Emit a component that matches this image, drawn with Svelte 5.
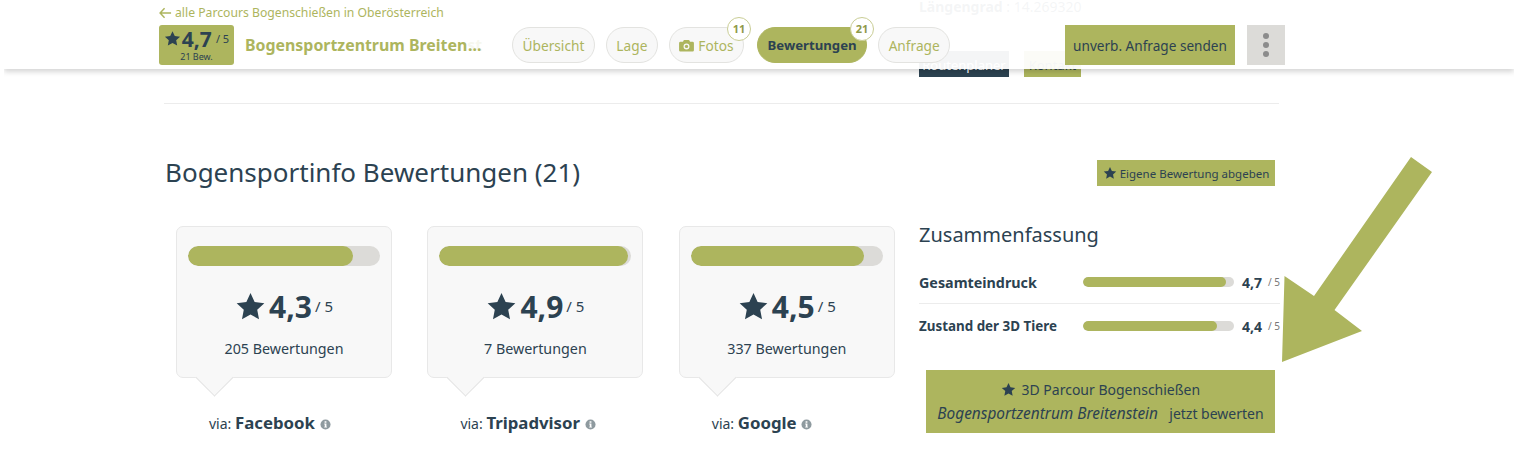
<script>
  const sources = [
    { name: 'Facebook', score: '4,3', pct: 86, count: '205 Bewertungen' },
    { name: 'Tripadvisor', score: '4,9', pct: 98, count: '7 Bewertungen' },
    { name: 'Google', score: '4,5', pct: 90, count: '337 Bewertungen' }
  ];
  const summary = [
    { label: 'Gesamteindruck', score: '4,7', pct: 95 },
    { label: 'Zustand der 3D Tiere', score: '4,4', pct: 89 }
  ];
  const star = 'M12 1.6l3.2 6.9 7.5.9-5.5 5.1 1.4 7.4L12 18.2l-6.6 3.7 1.4-7.4L1.3 9.4l7.5-.9z';
</script>

<div class="page">
  <div class="top-info">
    <p class="coord"><b>Längengrad</b> : 14.269320</p>
    <div class="top-buttons">
      <span class="route">Routenplaner</span>
      <span class="contact">Kontakt</span>
    </div>
  </div>
  <hr />

  <div class="head-row">
    <h1>Bogensportinfo Bewertungen (21)</h1>
    <button class="own">
      <svg viewBox="0 0 24 24" width="14" height="14"><path class="star" d={star} /></svg>
      Eigene Bewertung abgeben
    </button>
  </div>

  <div class="columns">
    <div class="cards">
      {#each sources as s}
        <div class="source">
          <div class="card">
            <div class="track big"><div class="fill" style="width:{s.pct}%"></div></div>
            <div class="score">
              <svg viewBox="0 0 24 24" width="31" height="31"><path class="star" d={star} /></svg>
              <strong>{s.score}</strong><span>/ 5</span>
            </div>
            <p class="count">{s.count}</p>
            <i class="tail"></i>
          </div>
          <p class="via">
            via: <b>{s.name}</b>
            <svg viewBox="0 0 12 12" width="11" height="11">
              <circle cx="6" cy="6" r="5.5" fill="#8e9a9f" />
              <path d="M5 2.400h2v1.600H5zM4.600 5h2.400v3.400h.6v1H4.600v-1h.6V6h-.6z" fill="#fff" />
            </svg>
          </p>
        </div>
      {/each}
    </div>

    <div class="side">
      <h2>Zusammenfassung</h2>
      {#each summary as r, i}
        <div class="row" class:first={i === 0}>
          <b class="label">{r.label}</b>
          <div class="track small"><div class="fill" style="width:{r.pct}%"></div></div>
          <b class="val">{r.score}</b>
          <span class="of">/ 5</span>
        </div>
      {/each}
      <button class="cta">
        <span>
          <svg viewBox="0 0 24 24" width="15" height="15"><path class="star" d={star} /></svg>
          3D Parcour Bogenschießen
        </span>
        <span><em>Bogensportzentrum Breitenstein</em>&nbsp; <span class="now">jetzt bewerten</span></span>
      </button>
    </div>
  </div>
</div>

<header>
  <div class="header-inner">
    <a class="back" href="#top">
      <svg viewBox="0 0 14 12" width="13" height="12"><path d="M6 1L1.200 6 6 11M1.200 6H13" fill="none" stroke="#adb55e" stroke-width="1.600" /></svg>
      alle Parcours Bogenschießen in Oberösterreich
    </a>
    <div class="bar">
      <div class="badge">
        <div class="badge-top">
          <svg viewBox="0 0 24 24" width="17" height="17"><path class="star" d={star} /></svg>
          <strong>4,7</strong><span>/ 5</span>
        </div>
        <small>21 Bew.</small>
      </div>
      <div class="title">Bogensportzentrum Breiten<i>st</i>...</div>
      <nav>
        <span class="pill">Übersicht</span>
        <span class="pill">Lage</span>
        <span class="pill">
          <svg viewBox="0 0 16 14" width="15" height="13">
            <path fill-rule="evenodd" d="M5.200 1h5.600l1 2H14.500a1.500 1.500 0 0 1 1.500 1.500V12a1.500 1.500 0 0 1-1.500 1.500h-13A1.500 1.500 0 0 1 0 12V4.500A1.500 1.500 0 0 1 1.500 3h2.700zM8 4.800a3.200 3.200 0 1 0 0 6.400 3.200 3.200 0 0 0 0-6.400z" fill="#adb55e" />
            <circle cx="8" cy="8" r="1.800" fill="#adb55e" />
          </svg>
          Fotos<i class="num">11</i>
        </span>
        <span class="pill active">Bewertungen<i class="num">21</i></span>
        <span class="pill">Anfrage</span>
      </nav>
      <button class="send">unverb. Anfrage senden</button>
      <button class="more" aria-label="Mehr"><i></i><i></i><i></i></button>
    </div>
  </div>
</header>

<svg class="arrow" viewBox="0 0 1514 467" width="1514" height="467">
  <polygon points="1411,157 1432,172 1334.500,310 1362,331 1282,362 1284.500,276 1314,296" fill="#adb55e" />
</svg>

<style>
  :global(body) {
    margin: 0;
    background: #fff;
    overflow: hidden;
  }
  .page {
    width: 1115px;
    margin-left: 164px;
    height: 467px;
    font-family: "Noto Sans", sans-serif;
    color: #2c4251;
  }
  .top-info {
    margin-left: 755px;
    height: 77px;
  }
  .coord {
    margin: 0;
    font-size: 14px;
    line-height: 14px;
    color: #2c4251;
  }
  .top-buttons {
    display: flex;
    gap: 15px;
    margin-top: 37px;
    font-size: 13px;
  }
  .route, .contact {
    box-sizing: border-box;
    height: 26px;
    line-height: 26px;
    padding: 1px 0 0;
    text-align: center;
    white-space: nowrap;
    overflow: hidden;
  }
  .route { background: #2c4251; color: #fff; width: 90px; }
  .contact { background: #adb55e; color: #2c4251; width: 57px; }
  hr {
    border: 0;
    border-top: 1px solid #ececec;
    margin: 26px 0 0;
  }
  .head-row {
    display: flex;
    justify-content: space-between;
    align-items: center;
    padding-right: 4px;
    margin-top: 54px;
  }
  h1 {
    margin: 0 0 2px 1px;
    font-size: 26px;
    font-weight: 400;
    line-height: 28px;
  }
  button {
    font-family: inherit;
    color: #2c4251;
    border: 0;
    background: #adb55e;
    padding: 0;
  }
  .own {
    height: 26px;
    width: 178px;
    font-size: 11.500px;
    display: flex;
    align-items: center;
    justify-content: center;
    gap: 3px;
  }
  .star { fill: #2c4251; }
  .columns {
    display: flex;
    margin-top: 38px;
  }
  .cards {
    display: grid;
    grid-template-columns: repeat(3, 216px);
    column-gap: 35.400px;
    margin-left: 12px;
    width: 719px;
    flex: none;
    align-self: flex-start;
  }
  .card {
    position: relative;
    height: 152px;
    box-sizing: border-box;
    background: #f8f8f8;
    border: 1px solid #e8e8e8;
    border-radius: 7px;
    padding: 19px 11px 0;
  }
  .track {
    background: #dcdbd8;
    overflow: hidden;
  }
  .track.big { height: 20px; border-radius: 10px; }
  .track.small { height: 10px; border-radius: 5px; width: 151px; flex: none; }
  .fill {
    height: 100%;
    background: #adb55e;
    border-radius: inherit;
  }
  .score {
    display: flex;
    align-items: center;
    justify-content: center;
    margin-top: 22px;
    height: 36px;
  }
  .score strong {
    font-size: 30px;
    margin: 0 3px 0 3px;
  }
  .score span { font-size: 15px; }
  .count {
    margin: 16px 0 0;
    text-align: center;
    font-size: 14.300px;
    line-height: 18px;
  }
  .tail {
    position: absolute;
    left: 24px;
    bottom: -14px;
    width: 27px;
    height: 27px;
    box-sizing: border-box;
    background: #f8f8f8;
    border-right: 1px solid #e4e4e4;
    border-bottom: 1px solid #e4e4e4;
    transform: rotate(45deg);
  }
  .via {
    margin: 34px 0 0;
    padding-left: 33px;
    font-size: 14px;
    line-height: 22px;
  }
  .via b { font-size: 16.800px; }
  .via svg { vertical-align: -1px; margin-left: 1px; }
  .side {
    flex: 1;
    margin-left: 24px;
  }
  h2 {
    margin: -1px 0 0;
    font-size: 20px;
    font-weight: 400;
    line-height: 20px;
  }
  .row {
    display: flex;
    align-items: center;
    height: 44px;
  }
  .row.first {
    margin-top: 16px;
    border-bottom: 1px solid #ececec;
    height: 42px;
  }
  .label { width: 164px; flex: none; font-size: 13.400px; }
  .first .label { font-size: 14.300px; }
  .val { margin-left: 8px; font-size: 14px; flex: none; }
  .of { margin-left: 6px; font-size: 10px; color: #777; flex: none; white-space: nowrap; }
  .cta {
    display: flex;
    flex-direction: column;
    align-items: center;
    justify-content: center;
    gap: 4px;
    margin: 22px 0 0 7px;
    width: 349px;
    height: 63px;
    font-size: 14px;
  }
  .cta svg { vertical-align: -2px; margin-right: 2px; }
  .cta em { font-size: 15.400px; }
  .now { margin-left: 4px; }

  header {
    position: absolute;
    top: 0;
    left: 4px;
    right: 0;
    height: 69px;
    background: rgba(255, 255, 255, 0.95);
    box-shadow: 0 3px 5px rgba(0, 0, 0, 0.16);
    clip-path: inset(0 0 -10px 0);
    font-family: "Noto Sans", sans-serif;
    color: #adb55e;
  }
  .header-inner {
    margin-left: 155px;
    width: 1126px;
  }
  .back {
    display: flex;
    align-items: center;
    gap: 3px;
    height: 25px;
    font-size: 12.200px;
    color: #adb55e;
    text-decoration: none;
  }
  .bar {
    display: flex;
    align-items: center;
    height: 40px;
  }
  .badge {
    width: 75px;
    height: 40px;
    background: #adb55e;
    border-radius: 3px;
    color: #2c4251;
    text-align: center;
    flex: none;
  }
  .badge-top {
    display: flex;
    align-items: center;
    justify-content: center;
    height: 27px;
  }
  .badge-top strong { font-size: 21px; margin: 0 4px 0 1px; }
  .badge-top span { font-size: 11px; }
  .badge small {
    display: block;
    font-size: 9px;
    line-height: 10px;
  }
  .title {
    width: 267px;
    flex: none;
    margin-left: 11px;
    font-size: 15.900px;
    font-weight: 700;
    white-space: nowrap;
  }
  .title i { font-style: normal; opacity: 0.1; margin-right: -14px; }
  nav {
    display: flex;
    gap: 11px;
    width: 553px;
    flex: none;
  }
  .pill {
    position: relative;
    height: 36px;
    box-sizing: border-box;
    display: flex;
    align-items: center;
    gap: 4px;
    padding: 0 9.500px;
    border: 1px solid #e3e3e0;
    border-radius: 18px;
    background: #f8f8f8;
    font-size: 13.700px;
  }
  .pill.active {
    background: #adb55e;
    border-color: #adb55e;
    color: #2c4251;
    font-weight: 700;
    font-size: 13.200px;
    margin-left: 2px;
  }
  .num {
    position: absolute;
    top: -11px;
    right: -8px;
    width: 24px;
    height: 24px;
    box-sizing: border-box;
    border: 1px solid #c9cd95;
    border-radius: 50%;
    background: #fff;
    color: #8f9a4a;
    font-size: 11px;
    font-weight: 700;
    font-style: normal;
    line-height: 22px;
    text-align: center;
  }
  .send {
    width: 170px;
    height: 40px;
    flex: none;
    font-size: 13.600px;
  }
  .more {
    width: 38px;
    height: 40px;
    flex: none;
    margin-left: 12px;
    background: #dcdbd8;
    display: flex;
    flex-direction: column;
    align-items: center;
    justify-content: center;
    gap: 3px;
  }
  .more i {
    width: 6px;
    height: 6px;
    border-radius: 50%;
    background: #8c8c8c;
  }
  .arrow {
    position: absolute;
    top: 0;
    left: 0;
    pointer-events: none;
  }
</style>
